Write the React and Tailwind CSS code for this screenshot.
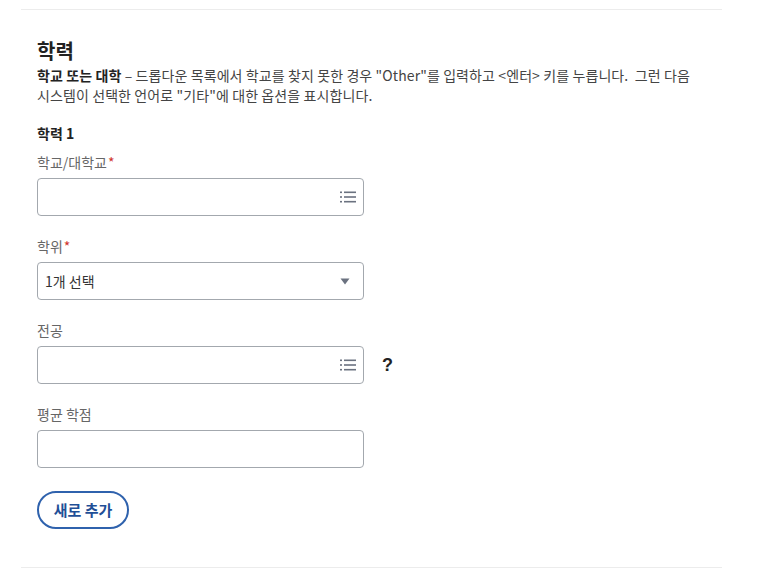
import React from "react";

const font = {
  fontFamily: '"Noto Sans CJK KR", "Liberation Sans", sans-serif',
};

function ListIcon() {
  return (
    <svg width="16" height="12" viewBox="0 0 16 12" className="text-[#6b7280]">
      <rect x="0" y="0.5" width="2" height="1.6" fill="currentColor" />
      <rect x="0" y="5.2" width="2" height="1.6" fill="currentColor" />
      <rect x="0" y="9.9" width="2" height="1.6" fill="currentColor" />
      <rect x="4" y="0.5" width="12" height="1.6" fill="currentColor" />
      <rect x="4" y="5.2" width="12" height="1.6" fill="currentColor" />
      <rect x="4" y="9.9" width="12" height="1.6" fill="currentColor" />
    </svg>
  );
}

function Label({ children, required }) {
  return (
    <div className="text-[14px] leading-[20px] text-[#666] mb-[6px]">
      {children}
      {required && <span className="text-[#d0342c] ml-[1px]">*</span>}
    </div>
  );
}

function Box({ children }) {
  return (
    <div className="w-[327px] h-[38px] rounded-[4px] border border-[#a3a8ae] bg-white flex items-center px-[7px]">
      {children}
    </div>
  );
}

export default function App() {
  return (
    <div className="bg-white w-[773px] h-[575px] pt-[9px]" style={font}>
      <div className="mx-[21px] w-[701px] border-t border-[#ececec]">
        <div className="pl-[16px] pt-[28px] pb-[38px]">
          <h2 className="text-[20px] leading-[26px] font-bold text-[#222]">학력</h2>
          <p className="text-[14px] leading-[20px] text-[#444] mt-[1px] tracking-[0.1px]">
            <span className="font-bold text-[#222]">학교 또는 대학</span> – 드롭다운 목록에서 학교를 찾지 못한 경우 "Other"를 입력하고 &lt;엔터&gt; 키를 누릅니다.&nbsp; 그런 다음
            <br />
            시스템이 선택한 언어로 "기타"에 대한 옵션을 표시합니다.
          </p>

          <h3 className="text-[14px] leading-[20px] font-bold text-[#222] mt-[18px]">학력 1</h3>

          <div className="mt-[9px]">
            <Label required>학교/대학교</Label>
            <Box>
              <div className="flex-1" />
              <ListIcon />
            </Box>
          </div>

          <div className="mt-[20px]">
            <Label required>학위</Label>
            <Box>
              <span className="flex-1 text-[14px] text-[#333]">1개 선택</span>
              <svg width="10" height="7" viewBox="0 0 10 7" className="mr-[6px]">
                <path d="M0.5 0.5 H9.5 L5 6.5 Z" fill="#6b7280" />
              </svg>
            </Box>
          </div>

          <div className="mt-[20px]">
            <Label>전공</Label>
            <div className="flex items-center h-[38px]">
              <Box>
                <div className="flex-1" />
                <ListIcon />
              </Box>
              <span
                className="ml-[18px] text-[18px] leading-[20px] font-bold text-[#222]"
                style={{ fontFamily: '"Liberation Sans", sans-serif' }}
              >
                ?
              </span>
            </div>
          </div>

          <div className="mt-[20px]">
            <Label>평균 학점</Label>
            <Box />
          </div>

          <button
            type="button"
            className="mt-[23px] w-[92px] h-[38px] rounded-full border-2 border-[#2f62ad] text-[#1f4f97] text-[15px] font-bold"
          >
            새로 추가
          </button>
        </div>
      </div>
      <div className="mx-[21px] w-[701px] border-t border-[#ececec]" />
    </div>
  );
}
